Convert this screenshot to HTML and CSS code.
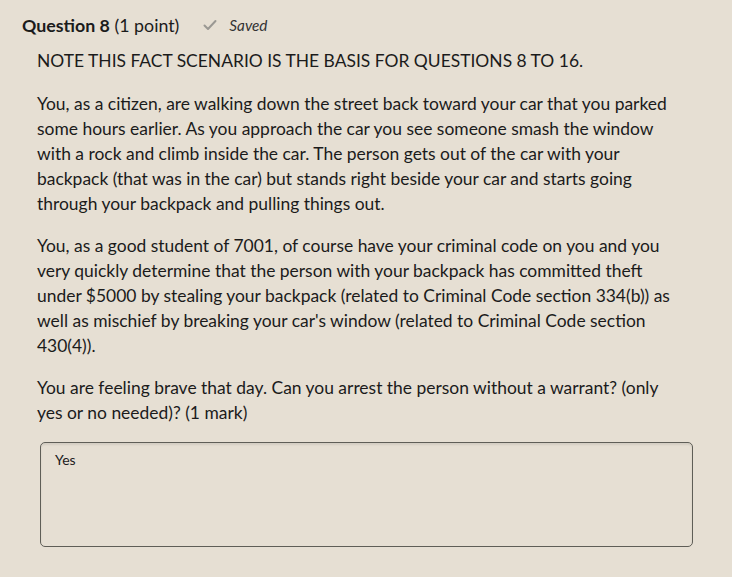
FILE: index.html
```html
<!DOCTYPE html>
<html>
<head>
<meta charset="utf-8">
<link rel="stylesheet" href="styles.css">
</head>
<body>
<div class="question">
  <div class="q-header">
    <span class="q-title"><b>Question 8</b> (1 point)</span>
    <span class="saved">
      <svg class="check" width="14" height="12" viewBox="0 0 14 12"><path d="M1.5 6.5 L5 10 L12.5 2" fill="none" stroke="#9a9893" stroke-width="2" stroke-linecap="round" stroke-linejoin="round"/></svg>
      <i>Saved</i>
    </span>
  </div>
  <div class="q-body">
    <p class="note">NOTE THIS FACT SCENARIO IS THE BASIS FOR QUESTIONS 8 TO 16.</p>
    <p>You, as a citizen, are walking down the street back toward your car that you parked some hours earlier. As you approach the car you see someone smash the window with a rock and climb inside the car. The person gets out of the car with your backpack (that was in the car) but stands right beside your car and starts going through your backpack and pulling things out.</p>
    <p>You, as a good student of 7001, of course have your criminal code on you and you very quickly determine that the person with your backpack has committed theft under $5000 by stealing your backpack (related to Criminal Code section 334(b)) as well as mischief by breaking your car's window (related to Criminal Code section 430(4)).</p>
    <p>You are feeling brave that day. Can you arrest the person without a warrant? (only yes or no needed)? (1 mark)</p>
    <div class="answer">Yes</div>
  </div>
</div>
</body>
</html>
```
FILE: styles.css
```css
html, body {
  margin: 0;
  padding: 0;
  background: #e6dfd3;
}
body {
  font-family: Lato, "Open Sans", sans-serif;
  color: #1b1b1b;
  width: 732px;
  height: 577px;
  overflow: hidden;
}
.question {
  padding: 13px 0 0 22px;
}
.q-header {
  display: flex;
  align-items: center;
  gap: 24px;
  height: 24px;
  font-size: 17.8px;
}
.q-title b {
  font-weight: 700;
}
.saved {
  display: flex;
  align-items: center;
  gap: 12px;
  font-size: 15.3px;
  color: #333;
}
.check {
  display: block;
}
.q-body {
  padding: 11px 0 0 15px;
  width: 648px;
  font-size: 17.45px;
  line-height: 25px;
}
.q-body p {
  margin: 0 0 17px 0;
}
.q-body p.note {
  margin-bottom: 18px;
}
.answer {
  margin: 0 0 0 3px;
  height: 105px;
  box-sizing: border-box;
  border: 1.5px solid #5f5e57;
  border-radius: 5px;
  box-shadow: inset 0 2px 2px rgba(0,0,0,0.08);
  padding: 8px 14px;
  font-size: 14px;
  line-height: 18px;
  width: 653px;
}
```
